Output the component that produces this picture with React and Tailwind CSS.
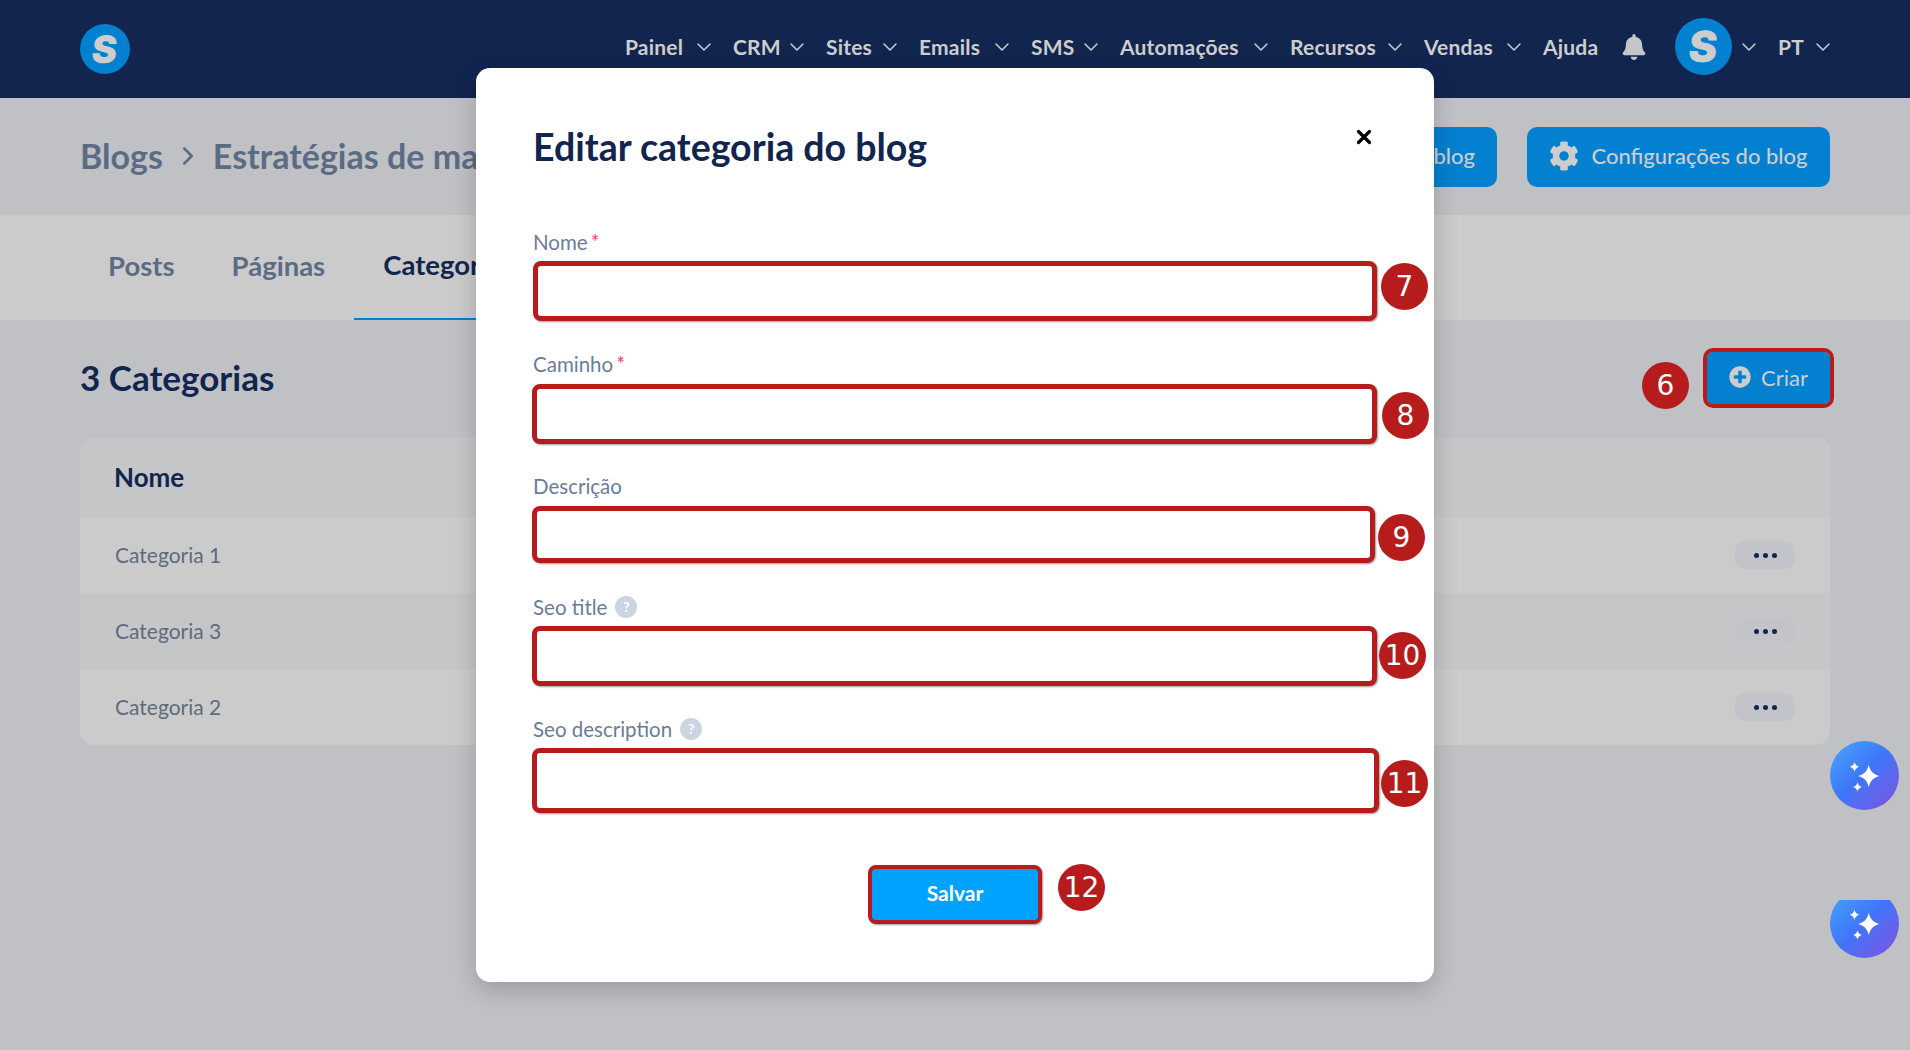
import React from "react";
import { ChevronDown, ChevronRight, X } from "lucide-react";
import { FaBell, FaCog, FaPlusCircle } from "react-icons/fa";

const navItems = [
  { label: "Painel", width: "w-[108px]", chevron: true },
  { label: "CRM", width: "w-[93px]", chevron: true },
  { label: "Sites", width: "w-[93px]", chevron: true },
  { label: "Emails", width: "w-[112px]", chevron: true },
  { label: "SMS", width: "w-[89px]", chevron: true },
  { label: "Automações", width: "w-[170px]", chevron: true },
  { label: "Recursos", width: "w-[134px]", chevron: true },
  { label: "Vendas", width: "w-[119px]", chevron: true },
  { label: "Ajuda", width: "w-[78px]", chevron: false },
];

const rows = [
  { name: "Categoria 1", bg: "bg-[#cbcbcb]" },
  { name: "Categoria 3", bg: "bg-[#c5c6c8]" },
  { name: "Categoria 2", bg: "bg-[#cbcbcb]" },
];

const fields = [
  { label: "Nome", required: true, wrap: "mt-[61px] w-[844px] -ml-px", labelGap: "", box: "mt-[6px]", input: "h-[60px]", num: "7", badge: "left-[848px] top-[2px]" },
  { label: "Caminho", required: true, wrap: "mt-[32px] w-[845px] -ml-[2px]", labelGap: "ml-px", box: "mt-[7px]", input: "h-[60px]", num: "8", badge: "left-[850px] top-[8px]" },
  { label: "Descrição", wrap: "mt-[31px] w-[843px] -ml-[2px]", labelGap: "ml-px", box: "mt-[7px]", input: "h-[57px]", num: "9", badge: "left-[846px] top-[8px]" },
  { label: "Seo title", help: true, wrap: "mt-[33px] w-[845px] -ml-[2px]", labelGap: "ml-px", box: "mt-[6px]", input: "h-[60px]", num: "10", badge: "left-[847px] top-[6px]" },
  { label: "Seo description", help: true, wrap: "mt-[32px] w-[847px] -ml-[2px]", labelGap: "ml-px", box: "mt-[6px]", input: "h-[65px]", num: "11", badge: "left-[849px] top-[12px]" },
];

const Badge = ({ children, className }) => (
  <div
    className={`absolute w-[47px] h-[47px] rounded-full bg-[#b71c1c] text-white flex items-center justify-center text-[28px] font-['DejaVu_Sans',sans-serif] ${className}`}
  >
    {children}
  </div>
);

const Logo = ({ className, textClass }) => (
  <div className={`rounded-full bg-[#0480d0] flex items-center justify-center ${className}`}>
    <span className={`block -skew-x-6 font-['Inter',sans-serif] font-black text-[#cdcdcd] ${textClass}`}>S</span>
  </div>
);

const Sparkles = () => (
  <svg viewBox="0 0 24 24" className="w-[36px] h-[36px]" fill="#fff">
    <path d="M14.500 4.500c.9 4.200 2.800 6.100 7 7.500-4.200 1.400-6.100 3.300-7 7.500-.9-4.200-2.800-6.100-7-7.500 4.200-1.400 6.100-3.300 7-7.500z" />
    <path d="M5 2.500c.4 1.900 1.200 2.700 3.200 3.400-2 .7-2.800 1.500-3.200 3.400-.4-1.900-1.200-2.700-3.200-3.400 2-.7 2.800-1.500 3.200-3.400z" />
    <path d="M7 16.200c.4 1.800 1.100 2.500 2.900 3.100-1.800.6-2.500 1.300-2.900 3.100-.4-1.800-1.100-2.500-2.900-3.100 1.800-.6 2.500-1.300 2.900-3.100z" />
  </svg>
);

const Dots = () => (
  <div className="w-[60px] h-[28px] rounded-[10px] bg-[#c3c4c9] flex items-center justify-center gap-1">
    <span className="w-[5px] h-[5px] rounded-full bg-[#12254f]"></span>
    <span className="w-[5px] h-[5px] rounded-full bg-[#12254f]"></span>
    <span className="w-[5px] h-[5px] rounded-full bg-[#12254f]"></span>
  </div>
);

const App = () => {
  return (
    <div className="relative h-[1050px] w-[1910px] overflow-hidden bg-[#c0c1c5] font-['Lato',sans-serif]">
      {/* Top nav */}
      <header className="h-[98px] bg-[#12254f] pl-[80px] pr-[75px] flex items-center justify-between text-[#cdcdcd]">
        <Logo className="w-[50px] h-[50px]" textClass="text-[38px]" />
        <nav className="flex items-center pb-[5px] text-[21px] font-bold tracking-[0.2px]">
          {navItems.map((item) => (
            <div key={item.label} className={`${item.width} flex items-center justify-between pr-[17px]`}>
              <span>{item.label}</span>
              {item.chevron && <ChevronDown className="w-6 h-6" strokeWidth={1.5} />}
            </div>
          ))}
          <FaBell className="w-[26px] h-[26px] mr-[28px] text-[#c4c6c9]" />
          <Logo className="w-[57px] h-[57px]" textClass="text-[43px]" />
          <ChevronDown className="w-6 h-6 ml-[5px] mr-[17px]" strokeWidth={1.5} />
          <span>PT</span>
          <ChevronDown className="w-6 h-6 ml-[7px]" strokeWidth={1.5} />
        </nav>
      </header>

      {/* Page title */}
      <div className="h-[117px] px-[80px] flex items-center justify-between">
        <div className="flex items-center whitespace-nowrap pb-[2px] text-[34px] font-bold text-[#5c6b84]">
          <span>Blogs</span>
          <ChevronRight className="w-[30px] h-[30px] mx-[10px] shrink-0" />
          <span>Estratégias de ma</span>
        </div>
        <div className="flex items-center gap-[30px] text-[22px] font-medium text-[#cdcdcd]">
          <div className="h-[60px] pl-[80px] pr-[22px] pb-[2px] rounded-[10px] bg-[#0480d0] flex items-center">blog</div>
          <div className="h-[60px] w-[303px] pb-[2px] rounded-[10px] bg-[#0480d0] flex items-center justify-center gap-[12px]">
            <FaCog className="w-[30px] h-[30px]" />
            <span>Configurações do blog</span>
          </div>
        </div>
      </div>

      {/* Tabs */}
      <div className="h-[105px] bg-[#cbcbcb] flex items-stretch text-[27.500px] font-bold text-[#5c6b84]">
        <div className="ml-[108px] pb-[3px] flex items-center">Posts</div>
        <div className="ml-[57px] pb-[3px] flex items-center">Páginas</div>
        <div className="ml-[29px] w-[122px] pl-[29px] pb-[3px] whitespace-nowrap flex items-center text-[#12254f] border-b-[2px] border-[#0480d0]">Categor</div>
      </div>

      {/* Content */}
      <div className="px-[80px]">
        <div className="h-[117px] flex items-center justify-between">
          <h2 className="pb-[4px] text-[35px] leading-[42px] font-bold text-[#12254f]">3 Categorias</h2>
          <div className="relative mt-[-1px]">
            <Badge className="left-[-65px] top-[10px]">6</Badge>
            <div className="w-[123px] h-[52px] pb-[2px] rounded-[6px] bg-[#0480d0] text-[#cdcdcd] text-[22px] flex items-center justify-center gap-[10px] outline-[4px] outline-[#b71c1c]">
              <FaPlusCircle className="w-[22px] h-[22px]" />
              <span>Criar</span>
            </div>
          </div>
        </div>
        <div className="rounded-[14px] overflow-hidden">
          <div className="h-[80px] bg-[#c5c6c8] pl-[34px] flex items-center text-[26px] font-bold text-[#12254f]">Nome</div>
          {rows.map((row) => (
            <div key={row.name} className={`h-[76px] ${row.bg} pl-[35px] pr-[35px] flex items-center justify-between text-[21px] text-[#5f6b7d]`}>
              <span>{row.name}</span>
              <Dots />
            </div>
          ))}
        </div>
      </div>

      {/* Floating assistant buttons */}
      <div className="absolute left-[1830px] top-[741px] w-[69px] h-[69px] rounded-full bg-gradient-to-br from-[#4aa5fb] via-[#3f74fa] to-[#7a4fdc] flex items-center justify-center">
        <Sparkles />
      </div>
      <div className="absolute left-[1830px] top-[900px] w-[69px] h-[59px] overflow-hidden">
        <div className="mt-[-11px] w-[69px] h-[69px] rounded-full bg-gradient-to-br from-[#4aa5fb] via-[#3f74fa] to-[#7a4fdc] flex items-center justify-center">
          <Sparkles />
        </div>
      </div>

      {/* Modal */}
      <div className="absolute left-[476px] top-[68px] w-[958px] h-[914px] rounded-[14px] bg-white shadow-[0_8px_24px_rgba(0,0,0,0.2)] pl-[58px] pt-[58px]">
        <button className="absolute left-[877px] top-[58px] text-black">
          <X className="w-[22px] h-[22px]" strokeWidth={3.5} />
        </button>
        <h1 className="h-[44px] -ml-px pb-[2px] text-[37.500px] leading-[42px] font-bold text-[#12254f]">Editar categoria do blog</h1>

        {fields.map((f) => (
          <div key={f.label} className={`relative ${f.wrap}`}>
            <label className={`h-[24px] pb-[2px] ${f.labelGap} flex items-center gap-[8px] text-[20.500px] leading-[24px] text-[#6b7c99]`}>
              <span>
                {f.label}
                {f.required && <span className="ml-[3px] text-[#f43f6e]">*</span>}
              </span>
              {f.help && (
                <span className="w-[22px] h-[22px] rounded-full bg-[#cbd5e1] text-white text-[14px] font-bold flex items-center justify-center">?</span>
              )}
            </label>
            <div className={`relative ${f.box}`}>
              <input className={`block w-full ${f.input} rounded-[8px] border-[5px] border-[#b71c1c] bg-white shadow-[1px_1px_2px_rgba(0,0,0,0.4)]`} />
              <Badge className={f.badge}>{f.num}</Badge>
            </div>
          </div>
        ))}

        <div className="relative ml-[334px] mt-[52px] w-[174px]">
          <button className="w-[174px] h-[59px] pb-[3px] rounded-[8px] border-[4px] border-[#b71c1c] bg-[#00a2ff] text-white text-[21px] font-bold shadow-[1px_1px_2px_rgba(0,0,0,0.4)]">
            Salvar
          </button>
          <Badge className="left-[190px] top-[-1px]">12</Badge>
        </div>
      </div>
    </div>
  );
};

export default App;
